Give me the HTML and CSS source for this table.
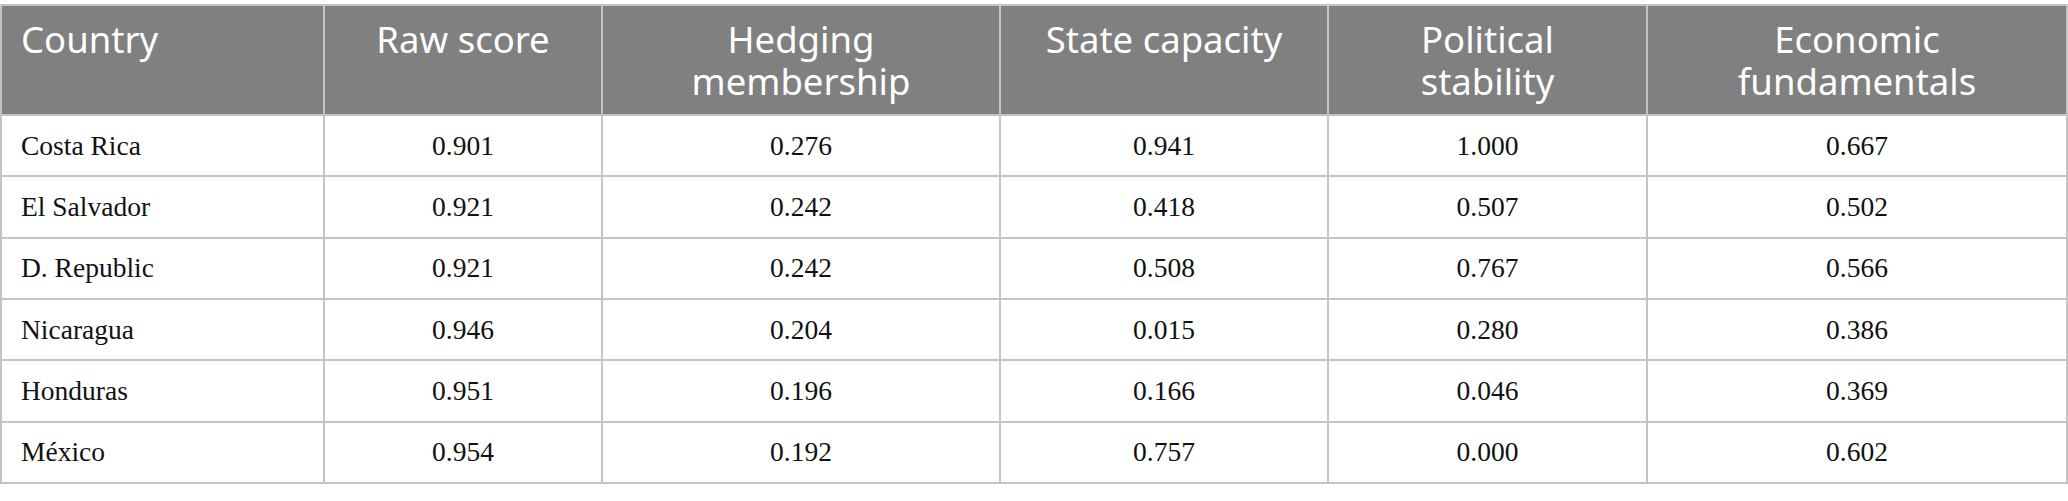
FILE: index.html
```html
<!DOCTYPE html>
<html lang="en">
<head>
<meta charset="utf-8">
<title>Hedging scores</title>
<link rel="stylesheet" href="styles.css">
</head>
<body>
<div class="wrap">
<table class="data">
  <colgroup>
    <col class="c1"><col class="c2"><col class="c3"><col class="c4"><col class="c5"><col class="c6">
  </colgroup>
  <thead>
    <tr>
      <th class="left">Country</th>
      <th>Raw score</th>
      <th>Hedging membership</th>
      <th>State capacity</th>
      <th>Political stability</th>
      <th>Economic fundamentals</th>
    </tr>
  </thead>
  <tbody>
    <tr><td class="left">Costa Rica</td><td>0.901</td><td>0.276</td><td>0.941</td><td>1.000</td><td>0.667</td></tr>
    <tr><td class="left">El Salvador</td><td>0.921</td><td>0.242</td><td>0.418</td><td>0.507</td><td>0.502</td></tr>
    <tr><td class="left">D. Republic</td><td>0.921</td><td>0.242</td><td>0.508</td><td>0.767</td><td>0.566</td></tr>
    <tr><td class="left">Nicaragua</td><td>0.946</td><td>0.204</td><td>0.015</td><td>0.280</td><td>0.386</td></tr>
    <tr><td class="left">Honduras</td><td>0.951</td><td>0.196</td><td>0.166</td><td>0.046</td><td>0.369</td></tr>
    <tr><td class="left">México</td><td>0.954</td><td>0.192</td><td>0.757</td><td>0.000</td><td>0.602</td></tr>
  </tbody>
</table>
</div>
</body>
</html>
```
FILE: styles.css
```css
html, body {
  margin: 0;
  padding: 0;
  background: #ffffff;
}
.wrap {
  padding-top: 4px;
}
.data {
  width: 2068px;
  table-layout: fixed;
  border-collapse: separate;
  border-spacing: 0;
  border-left: 2px solid #c4c4c4;
  border-top: 2px solid #c4c4c4;
}
.c1 { width: 323px; }
.c2 { width: 278px; }
.c3 { width: 398px; }
.c4 { width: 328px; }
.c5 { width: 319px; }
.c6 { width: 420px; }
.data th, .data td {
  border-right: 2px solid #c4c4c4;
  border-bottom: 2px solid #c4c4c4;
  box-sizing: border-box;
}
.data th {
  background: #808080;
  color: #ffffff;
  font-family: "Noto Sans", "Open Sans", sans-serif;
  font-weight: 400;
  font-size: 36.5px;
  line-height: 42px;
  text-align: center;
  vertical-align: top;
  padding: 12px 26px 12px 26px;
  height: 110px;
}
.data td {
  font-family: "Liberation Serif", "Times New Roman", serif;
  font-size: 27.5px;
  color: #111111;
  text-align: center;
  vertical-align: middle;
  padding: 0 20px;
  height: 61.33px;
}
.data .left {
  text-align: left;
  padding-left: 19px;
}
```
